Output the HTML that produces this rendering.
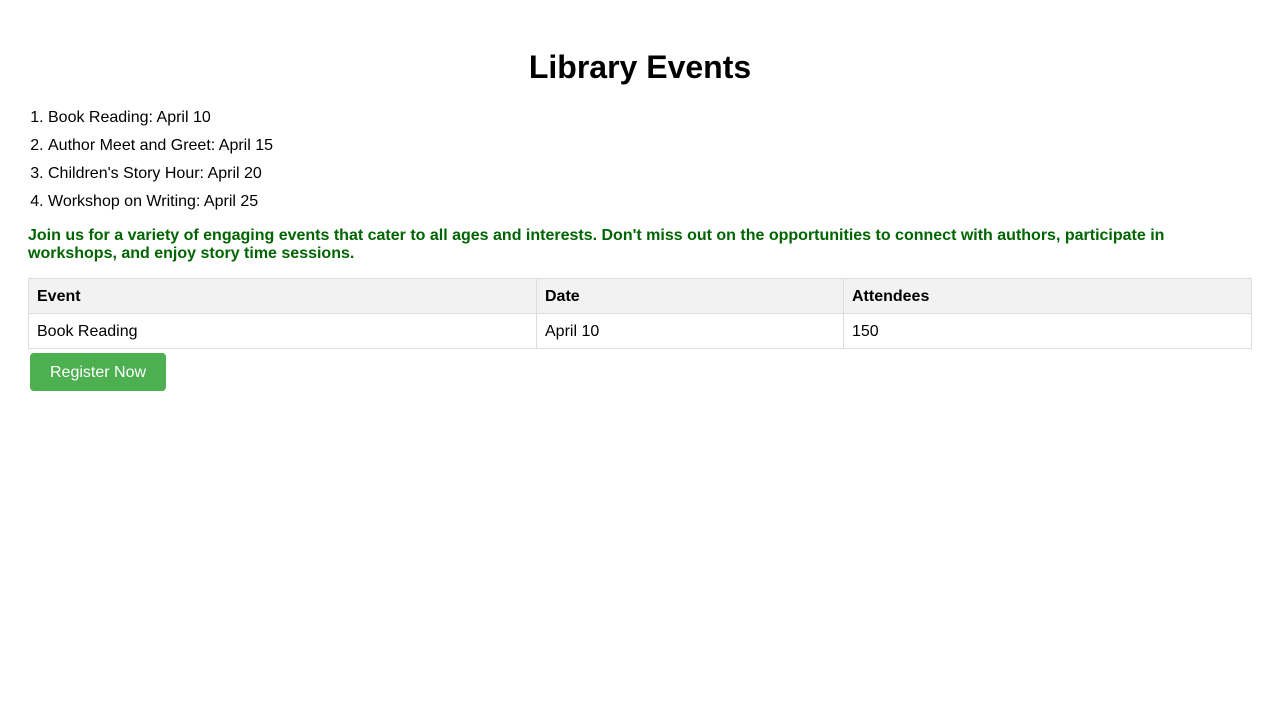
<!DOCTYPE html>
<html><head><style>
body{margin:0;padding:20px 28px;font-family:"Liberation Sans",sans-serif;color:#000;background:#fff}
h1{text-align:center;font-size:32px;margin:29px 0 18px;line-height:37px}
ol{margin:0;padding-left:20px;font-size:16px}
li{line-height:28px}
p{color:#006400;font-weight:bold;font-size:16px;margin:11px 0 15px;line-height:18px}
table{width:100%;border-collapse:collapse;font-size:16px}
th,td{border:1px solid #ddd;padding:9px 8px 7px;text-align:left;height:18px}
th{background:#f2f2f2}
button{margin:4px 2px;background:#4CAF50;color:#fff;border:none;border-radius:4px;padding:11px 20px 9px;font-size:16px;font-family:"Liberation Sans",sans-serif}
</style></head><body>
<h1>Library Events</h1>
<ol><li>Book Reading: April 10</li><li>Author Meet and Greet: April 15</li><li>Children's Story Hour: April 20</li><li>Workshop on Writing: April 25</li></ol>
<p>Join us for a variety of engaging events that cater to all ages and interests. Don't miss out on the opportunities to connect with authors, participate in workshops, and enjoy story time sessions.</p>
<table><tr><th style="width:491px">Event</th><th style="width:290px">Date</th><th>Attendees</th></tr>
<tr><td>Book Reading</td><td>April 10</td><td>150</td></tr></table>
<button>Register Now</button>
</body></html>
